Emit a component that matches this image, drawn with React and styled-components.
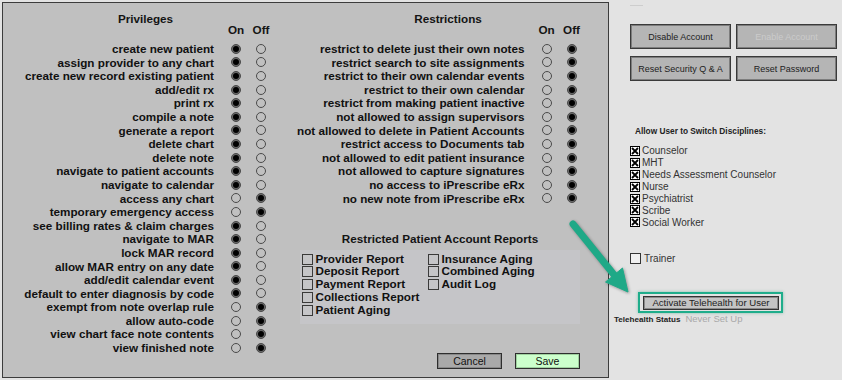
import React from 'react'
import styled, { createGlobalStyle } from 'styled-components'

const GlobalStyle = createGlobalStyle`
  html, body {
    margin: 0;
    padding: 0;
    background: #e3e3e3;
  }
  body {
    font-family: "Liberation Sans", Arial, sans-serif;
  }
`

const privileges = [
  ['create new patient', true],
  ['assign provider to any chart', true],
  ['create new record existing patient', true],
  ['add/edit rx', true],
  ['print rx', true],
  ['compile a note', true],
  ['generate a report', true],
  ['delete chart', true],
  ['delete note', true],
  ['navigate to patient accounts', true],
  ['navigate to calendar', true],
  ['access any chart', false],
  ['temporary emergency access', false],
  ['see billing rates & claim charges', true],
  ['navigate to MAR', true],
  ['lock MAR record', true],
  ['allow MAR entry on any date', true],
  ['add/edit calendar event', true],
  ['default to enter diagnosis by code', true],
  ['exempt from note overlap rule', false],
  ['allow auto-code', false],
  ['view chart face note contents', false],
  ['view finished note', false],
]

const restrictions = [
  'restrict to delete just their own notes',
  'restrict search to site assignments',
  'restrict to their own calendar events',
  'restrict to their own calendar',
  'restrict from making patient inactive',
  'not allowed to assign supervisors',
  'not allowed to delete in Patient Accounts',
  'restrict access to Documents tab',
  'not allowed to edit patient insurance',
  'not allowed to capture signatures',
  'no access to iPrescribe eRx',
  'no new note from iPrescribe eRx',
].map(label => [label, false])

const reports = [
  'Provider Report',
  'Deposit Report',
  'Payment Report',
  'Collections Report',
  'Patient Aging',
  'Insurance Aging',
  'Combined Aging',
  'Audit Log',
]

const disciplines = [
  'Counselor',
  'MHT',
  'Needs Assessment Counselor',
  'Nurse',
  'Psychiatrist',
  'Scribe',
  'Social Worker',
]

const Page = styled.div`
  position: relative;
  display: flex;
  width: 842px;
  height: 380px;
  background: #e3e3e3;
  font-family: "Liberation Sans", Arial, sans-serif;
  overflow: hidden;
`

const MainPanel = styled.div`
  box-sizing: border-box;
  flex: none;
  margin: 2px 0 0 2px;
  width: 607px;
  height: 376px;
  border: 1px solid #3c3c3c;
  background: #c0c0c0;
  display: grid;
  grid-template-columns: 285px 1fr;
`

const Column = styled.section`
  display: flex;
  flex-direction: column;
  padding-top: 9px;
  min-height: 0;
`

const Title = styled.h2`
  margin: 0;
  font-size: 11.7px;
  font-weight: bold;
  line-height: 14px;
  text-align: center;
  color: #141414;
  white-space: nowrap;
`

const OnOffHead = styled.div`
  display: grid;
  grid-template-columns: 1fr 25px 25px;
  margin: -2px ${p => p.$inset}px 6px 0;
  font-size: 11.7px;
  font-weight: bold;
  line-height: 12px;
  color: #141414;

  span {
    text-align: center;
  }
`

const Table = styled.div`
  display: grid;
  grid-template-columns: 1fr 25px 25px;
  grid-auto-rows: 13.6px;
  align-items: center;
  margin-right: ${p => p.$inset}px;
`

const Label = styled.span`
  padding-right: 9.5px;
  text-align: right;
  white-space: nowrap;
  font-size: 11.7px;
  font-weight: bold;
  line-height: 13.6px;
  color: #111;
`

const Radio = styled.span`
  justify-self: center;
  position: relative;
  box-sizing: border-box;
  width: 10px;
  height: 10px;
  border-radius: 50%;
  border: 1px solid #4a4a4a;
  background: ${p => (p.$checked ? '#6a6a6a' : 'transparent')};

  &::after {
    content: '';
    display: ${p => (p.$checked ? 'block' : 'none')};
    position: absolute;
    left: 1px;
    top: 1px;
    width: 6px;
    height: 6px;
    border-radius: 50%;
    background: #000;
  }
`

const Reports = styled.div`
  margin: 27px 0 0 12px;
  width: 280px;
`

const ReportsBox = styled.div`
  display: grid;
  grid-template-columns: 126px 1fr;
  grid-template-rows: repeat(5, 12.75px);
  grid-auto-flow: column;
  padding: 2.5px 0 8px 2px;
  margin-top: 4px;
  background: #c5c5c8;
`

const CheckItem = styled.label`
  display: flex;
  align-items: center;
  gap: 2.5px;
  font-size: 11.7px;
  font-weight: bold;
  line-height: 12.75px;
  color: #111;
  white-space: nowrap;
`

const Box = styled.span`
  box-sizing: border-box;
  width: 11px;
  height: 11px;
  border: 1px solid #3a3a3a;
  flex: none;
`

const Footer = styled.div`
  margin-top: auto;
  display: flex;
  justify-content: flex-end;
  gap: 13px;
  padding: 0 28px 8.5px 0;
`

const ActionButton = styled.button`
  box-sizing: border-box;
  width: 65px;
  height: 16px;
  padding: 0;
  border: 1px solid #2e2e2e;
  box-shadow: inset 0 0 0 1px ${p => (p.$save ? '#9fd09f' : '#888')};
  background: ${p => (p.$save ? '#ccffcc' : '#a9a9a9')};
  font-family: "Liberation Sans", Arial, sans-serif;
  font-size: 10.5px;
  line-height: 14px;
  color: #111;
`

const Side = styled.aside`
  flex: 1;
  display: flex;
  flex-direction: column;
  align-items: flex-start;
  padding-left: 21px;
`

const Dash = styled.div`
  margin-top: 5px;
  width: 13px;
  height: 1px;
  background: #cdcdcd;
`

const ButtonGrid = styled.div`
  display: grid;
  grid-template-columns: 101px 101px;
  grid-auto-rows: 25px;
  column-gap: 5px;
  row-gap: 7px;
  margin-top: 18px;
`

const SideButton = styled.button`
  box-sizing: border-box;
  padding: 0;
  border: 1px solid #3a3a3a;
  box-shadow: inset 0 0 0 1px #7d7d7d;
  background: #b5b5b5;
  font-family: "Liberation Sans", Arial, sans-serif;
  font-size: 9px;
  color: ${p => (p.disabled ? '#cbcbcb' : '#222')};
`

const SectionLabel = styled.div`
  margin: 45px 0 0 5px;
  font-size: 8.3px;
  font-weight: bold;
  line-height: 10px;
  color: #222;
`

const DisciplineList = styled.div`
  display: flex;
  flex-direction: column;
  margin-top: 9px;
`

const Discipline = styled.label`
  display: flex;
  align-items: center;
  gap: 2px;
  height: 11.9px;
  font-size: 10px;
  color: #333;
  white-space: nowrap;
`

const Trainer = styled(Discipline)`
  margin-top: 24px;
  gap: 3px;
  font-size: 10px;
`

const CheckedBox = () => (
  <svg width="10" height="10" viewBox="0 0 10 10">
    <rect x="0.5" y="0.5" width="9" height="9" fill="#fff" stroke="#000" />
    <path d="M2 2 L8 8 M8 2 L2 8" stroke="#000" strokeWidth="1.8" />
  </svg>
)

const TrainerBox = styled.span`
  box-sizing: border-box;
  width: 11px;
  height: 11px;
  border: 1px solid #333;
  background: #efefef;
`

const Highlight = styled.div`
  margin: 28px 0 0 8px;
  padding: 2px 2px 1px 3px;
  border: 2px solid #1fad8b;
  box-shadow: 0 0 3px rgba(20, 150, 115, 0.45);
`

const TeleButton = styled.button`
  display: block;
  box-sizing: border-box;
  width: 136px;
  height: 14px;
  padding: 0;
  border: 1px solid #333;
  box-shadow: inset 0 0 0 1px #8a8a8a;
  background: #c4c4c4;
  font-family: "Liberation Sans", Arial, sans-serif;
  font-size: 9.6px;
  line-height: 12px;
  color: #222;
`

const Status = styled.div`
  display: flex;
  align-items: baseline;
  gap: 5px;
  margin: 1px 0 0 -16px;
  line-height: 10px;
`

const StatusLabel = styled.span`
  font-size: 8.1px;
  font-weight: bold;
  color: #222;
`

const StatusValue = styled.span`
  font-size: 9.5px;
  color: #a9a9a9;
`

const Arrow = styled.svg`
  position: absolute;
  left: 565px;
  top: 215px;
  pointer-events: none;
  filter: drop-shadow(1px 1px 1.5px rgba(0, 0, 0, 0.35));
`

const PermTable = ({ title, rows, inset }) => (
  <Column>
    <Title>{title}</Title>
    <OnOffHead $inset={inset}>
      <i />
      <span>On</span>
      <span>Off</span>
    </OnOffHead>
    <Table $inset={inset}>
      {rows.map(([label, on]) => (
        <React.Fragment key={label}>
          <Label>{label}</Label>
          <Radio $checked={on} />
          <Radio $checked={!on} />
        </React.Fragment>
      ))}
    </Table>
  </Column>
)

export default function App() {
  return (
    <Page>
      <GlobalStyle />
      <MainPanel>
        <PermTable title="Privileges" rows={privileges} inset={14.5} />
        <Column>
          <Title>Restrictions</Title>
          <OnOffHead $inset={24}>
            <i />
            <span>On</span>
            <span>Off</span>
          </OnOffHead>
          <Table $inset={24}>
            {restrictions.map(([label, on]) => (
              <React.Fragment key={label}>
                <Label>{label}</Label>
                <Radio $checked={on} />
                <Radio $checked={!on} />
              </React.Fragment>
            ))}
          </Table>
          <Reports>
            <Title>Restricted Patient Account Reports</Title>
            <ReportsBox>
              {reports.map(r => (
                <CheckItem key={r}>
                  <Box />
                  {r}
                </CheckItem>
              ))}
            </ReportsBox>
          </Reports>
          <Footer>
            <ActionButton>Cancel</ActionButton>
            <ActionButton $save>Save</ActionButton>
          </Footer>
        </Column>
      </MainPanel>

      <Side>
        <Dash />
        <ButtonGrid>
          <SideButton>Disable Account</SideButton>
          <SideButton disabled>Enable Account</SideButton>
          <SideButton>Reset Security Q &amp; A</SideButton>
          <SideButton>Reset Password</SideButton>
        </ButtonGrid>
        <SectionLabel>Allow User to Switch Disciplines:</SectionLabel>
        <DisciplineList>
          {disciplines.map(d => (
            <Discipline key={d}>
              <CheckedBox />
              {d}
            </Discipline>
          ))}
        </DisciplineList>
        <Trainer>
          <TrainerBox />
          Trainer
        </Trainer>
        <Highlight>
          <TeleButton>Activate Telehealth for User</TeleButton>
        </Highlight>
        <Status>
          <StatusLabel>Telehealth Status</StatusLabel>
          <StatusValue>Never Set Up</StatusValue>
        </Status>
      </Side>

      <Arrow width="72" height="86" viewBox="0 0 72 86">
        <line x1="8" y1="9" x2="50" y2="61" stroke="#1fa987" strokeWidth="7" strokeLinecap="round" />
        <polygon points="63,77 57.5,53 40.5,67" fill="#1fa987" stroke="#1fa987" strokeWidth="1" strokeLinejoin="round" />
      </Arrow>
    </Page>
  )
}
